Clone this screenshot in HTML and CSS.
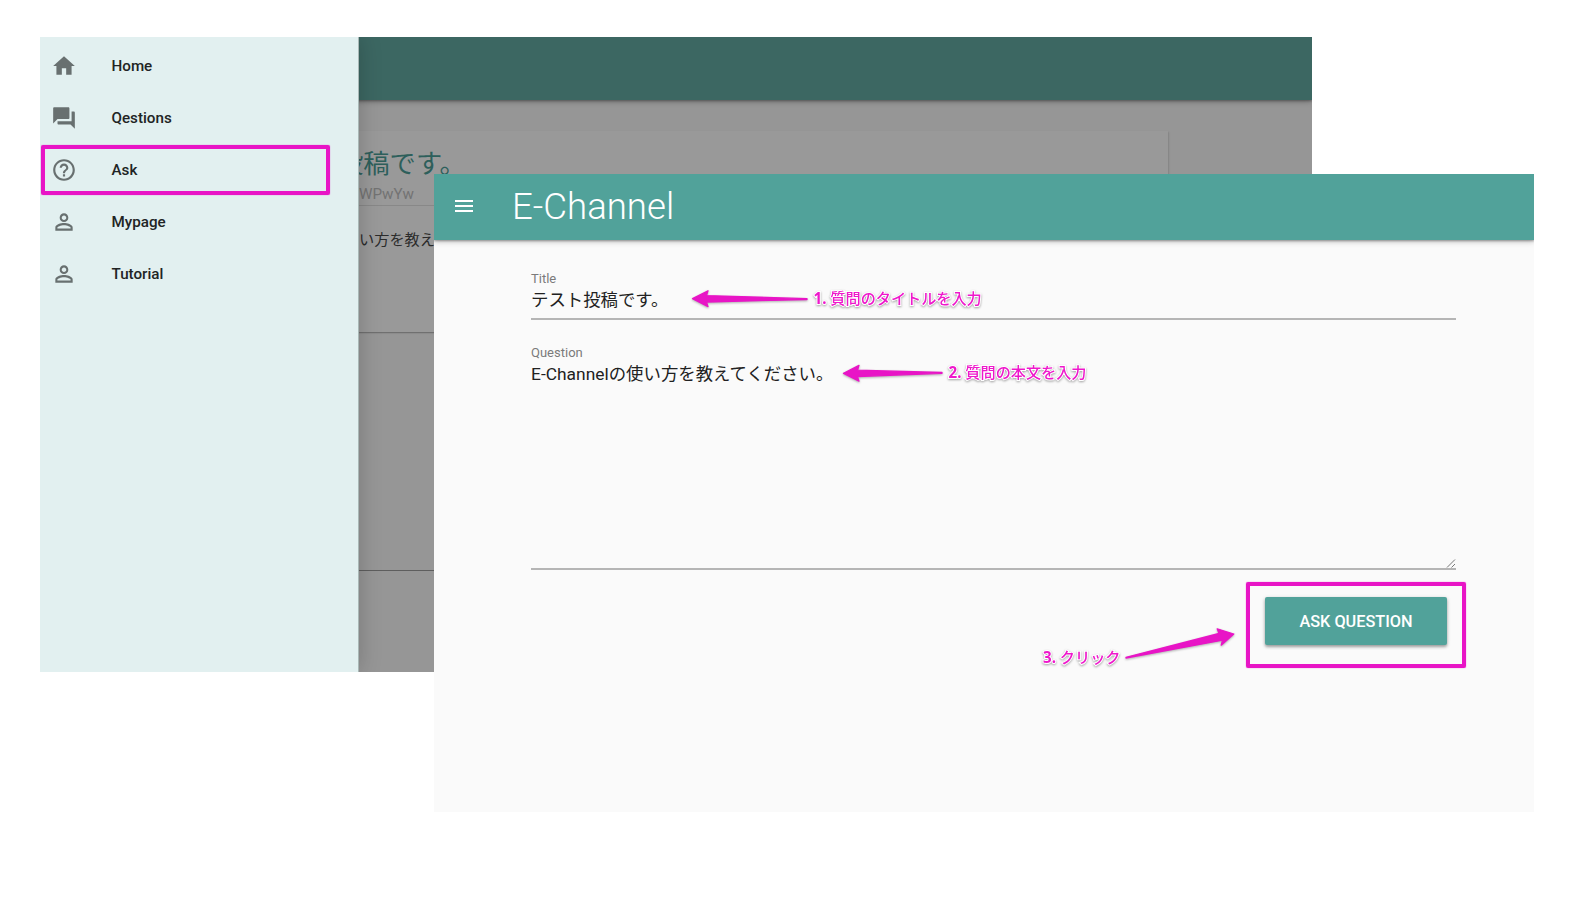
FILE: index.html
```html
<!DOCTYPE html>
<html lang="ja">
<head>
<meta charset="utf-8">
<title>E-Channel</title>
<link rel="stylesheet" href="styles.css">
</head>
<body>
<main class="stage">
  <section class="window window-menu">
    <div class="dim-header"></div>
    <article class="post">
      <h2 class="post-title">投稿です。</h2>
      <div class="post-id">WPwYw</div>
      <p class="post-text">い方を教え</p>
    </article>
    <div class="dim-rule"></div>
    <nav class="drawer">
      <a class="item"><svg class="icon" viewBox="0 0 24 24"><path d="M10 20v-6h4v6h5v-8h3L12 3 2 12h3v8z"/></svg><span>Home</span></a>
      <a class="item"><svg class="icon" viewBox="0 0 24 24"><path d="M21 6h-2v9H6v2c0 .55.45 1 1 1h11l4 4V7c0-.55-.45-1-1-1zm-4 6V3c0-.55-.45-1-1-1H3c-.55 0-1 .45-1 1v14l4-4h10c.55 0 1-.45 1-1z"/></svg><span>Qestions</span></a>
      <a class="item"><svg class="icon" viewBox="0 0 24 24"><path d="M11 18h2v-2h-2v2zm1-16C6.480 2 2 6.480 2 12s4.480 10 10 10 10-4.480 10-10S17.520 2 12 2zm0 18c-4.410 0-8-3.590-8-8s3.590-8 8-8 8 3.590 8 8-3.590 8-8 8zm0-14c-2.210 0-4 1.790-4 4h2c0-1.100.9-2 2-2s2 .9 2 2c0 2-3 1.750-3 5h2c0-2.250 3-2.500 3-5 0-2.210-1.790-4-4-4z"/></svg><span>Ask</span></a>
      <a class="item"><svg class="icon" viewBox="0 0 24 24"><path d="M12 5.900c1.160 0 2.100.94 2.100 2.100s-.94 2.100-2.100 2.100S9.900 9.160 9.900 8s.94-2.100 2.100-2.100m0 9c2.970 0 6.100 1.460 6.100 2.100v1.100H5.900V17c0-.64 3.130-2.100 6.100-2.100M12 4C9.790 4 8 5.790 8 8s1.790 4 4 4 4-1.790 4-4-1.790-4-4-4zm0 9c-2.670 0-8 1.340-8 4v3h16v-3c0-2.660-5.330-4-8-4z"/></svg><span>Mypage</span></a>
      <a class="item"><svg class="icon" viewBox="0 0 24 24"><path d="M12 5.900c1.160 0 2.100.94 2.100 2.100s-.94 2.100-2.100 2.100S9.900 9.160 9.900 8s.94-2.100 2.100-2.100m0 9c2.970 0 6.100 1.460 6.100 2.100v1.100H5.900V17c0-.64 3.130-2.100 6.100-2.100M12 4C9.790 4 8 5.790 8 8s1.790 4 4 4 4-1.790 4-4-1.790-4-4-4zm0 9c-2.670 0-8 1.340-8 4v3h16v-3c0-2.660-5.330-4-8-4z"/></svg><span>Tutorial</span></a>
    </nav>
  </section>

  <section class="window window-form">
    <header class="bar">
      <svg class="burger" viewBox="0 0 24 24"><path d="M3 18h18v-2H3v2zm0-5h18v-2H3v2zm0-7v2h18V6H3z"/></svg>
      <h1 class="brand">E-Channel</h1>
    </header>
    <form class="form">
      <div class="field field-title">
        <label class="label">Title</label>
        <div class="value">テスト投稿です。</div>
      </div>
      <div class="field field-question">
        <label class="label">Question</label>
        <div class="value">E-Channelの使い方を教えてください。</div>
        <svg class="grip" viewBox="0 0 10 10"><path d="M1 9.500L9 1.500M5.500 9.500L9 6"/></svg>
      </div>
      <div class="actions"><button type="button" class="button">ASK QUESTION</button></div>
    </form>
  </section>

  <div class="frame frame-ask"></div>
  <div class="frame frame-button"></div>
  <svg class="arrows" viewBox="0 0 1586 900">
    <path d="M692.500 298.700L708 290.800L706.500 295.600L807 298.700V299.500L706.500 302L708 306.600Z"/>
    <path d="M843.500 373.300L859 365.400L857.500 370.200L942 372.500V373.300L857.500 376.600L859 381.200Z"/>
    <path d="M1233.800 634L1217.200 628.800L1219 633.500L1126 657.300V658L1222.500 640.200L1221.200 645.200Z"/>
  </svg>
  <div class="note note-title"><b>1.</b> 質問のタイトルを入力</div>
  <div class="note note-question"><b>2.</b> 質問の本文を入力</div>
  <div class="note note-click"><b>3.</b> クリック</div>
</main>
</body>
</html>
```
FILE: styles.css
```css
* { box-sizing: border-box; }
body { margin: 0; background: #fff; font-family: Roboto, "Noto Sans CJK JP", sans-serif; }
h1, h2, p { margin: 0; font-weight: 400; }
.stage { position: relative; width: 1586px; height: 900px; overflow: hidden; }
.window { position: absolute; overflow: hidden; }

.window-menu { left: 40px; top: 37px; width: 1272px; height: 635px; background: #969696; }
.dim-header { height: 63px; background: #3c6762; box-shadow: 0 1px 6px rgba(0,0,0,.35), 0 1px 2px rgba(0,0,0,.25); }
.post { width: 1008px; height: 201px; margin: 31px 0 0 120px; padding: 16px 0 0 177px; background: #999; box-shadow: 1px 1px 2px rgba(0,0,0,.1), 0 1px 1px rgba(0,0,0,.2); white-space: nowrap; }
.post-title { font-size: 26.300px; line-height: 34px; color: #2d5f5b; }
.post-id { margin-left: 22px; height: 26px; padding-top: 3px; font-size: 15.200px; line-height: 20px; color: #737373; }
.post::before { content: ""; position: absolute; left: 160px; top: 168px; width: 1008px; height: 1px; background: #888; }
.post-text { margin: 21px 0 0 22px; font-size: 15.200px; line-height: 24px; color: #2b2b2b; }
.dim-rule { height: 1px; margin-top: 238px; background: #5e5e5e; }
.drawer { position: absolute; left: 0; top: 0; width: 318px; height: 635px; padding-top: 3px; background: #e2f0f0; box-shadow: 1px 0 0 #a9b8b6, 0 0 22px rgba(0,0,0,.22); }
.item { display: flex; align-items: center; height: 52.100px; padding-left: 10.500px; font-size: 15.200px; font-weight: 500; color: #212424; }
.icon { width: 26px; height: 26px; margin-right: 35px; fill: #687070; }

.window-form { left: 434px; top: 174px; width: 1100px; height: 638px; background: #fafafa; }
.bar { display: flex; align-items: center; height: 66px; padding: 0 0 2px 17.500px; background: #51a29a; color: #fff; box-shadow: 0 1px 6px rgba(0,0,0,.3), 0 1px 2px rgba(0,0,0,.3); }
.burger { width: 24px; height: 24px; margin-right: 36.500px; fill: #fff; }
.brand { padding-top: 1px; font-size: 36.600px; font-weight: 300; }
.form { padding: 31px 78px 0 97px; }
.field { position: relative; border-bottom: 2px solid #b5b5b5; }
.label { display: block; font-size: 13px; line-height: 16px; color: #7b7b7b; }
.value { padding-top: 1px; font-size: 17.400px; line-height: 24px; color: #212121; white-space: nowrap; }
.field-title { height: 49px; }
.field-question { height: 225px; margin-top: 25px; }
.grip { position: absolute; right: 0; bottom: 0; width: 10px; height: 10px; fill: none; stroke: #777; stroke-width: 1; }
.actions { display: flex; justify-content: flex-end; padding: 27px 9px 0 0; }
.button { width: 182px; height: 48px; padding-bottom: 1px; border: 0; border-radius: 2px; background: #51a29a; color: #fff; font: 500 16.300px Roboto, sans-serif; box-shadow: 0 2px 3px rgba(0,0,0,.3), 0 1px 4px rgba(0,0,0,.15); }

.frame { position: absolute; border: 4px solid #e815c6; border-radius: 2px; box-shadow: 0 0 1px #e815c6; }
.frame-ask { left: 41px; top: 145px; width: 289px; height: 50px; }
.frame-button { left: 1246px; top: 582px; width: 220px; height: 86px; }
.arrows { position: absolute; left: 0; top: 0; width: 1586px; height: 900px; fill: #e815c6; stroke: #e815c6; stroke-width: 1.300; stroke-linejoin: round; filter: drop-shadow(0 1px 1px rgba(0,0,0,.3)); pointer-events: none; }
.note { position: absolute; font: 500 15.150px/20px "Noto Sans", "Noto Sans CJK JP", sans-serif; color: #ee18cb; white-space: nowrap; -webkit-text-stroke: 2px #fff; paint-order: stroke fill; filter: drop-shadow(0 1px 1px rgba(0,0,0,.35)); }
.note-title { left: 813.500px; top: 288px; }
.note-question { left: 948.500px; top: 362px; }
.note-click { left: 1043px; top: 647px; }
```
